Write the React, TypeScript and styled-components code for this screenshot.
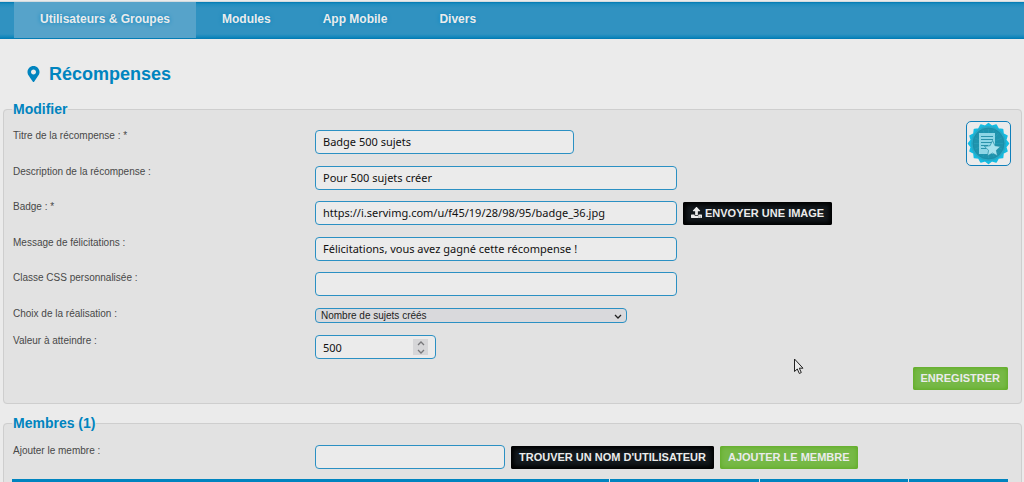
import React, { useId, useState } from "react";
import styled, { createGlobalStyle, css } from "styled-components";
import { FaMapMarkerAlt, FaUpload } from "react-icons/fa";

const blue = "#0084bf";

const GlobalStyle = createGlobalStyle`
  * { box-sizing: border-box; }
  body {
    margin: 0;
    background: #ebebeb;
    color: #404040;
    font-family: "Liberation Sans", Arial, sans-serif;
    font-size: 10px;
    line-height: 12px;
  }
`;

const Page = styled.div`
  height: 100vh;
  overflow: hidden;
`;

const NavBar = styled.nav`
  display: flex;
  margin-top: 2px;
  padding: 0 14px;
  background: linear-gradient(#0079b2, #1f8dbf 2px, #3092c1 6px, #3092c1 32px, #1288bd 35px, #0079b2);
  box-shadow: 0 -1px 0 #d3dbdf;
`;

const NavLink = styled.a<{ $active?: boolean }>`
  padding: 0 26px;
  font-size: 12px;
  font-weight: bold;
  line-height: 34px;
  height: 36px;
  margin-bottom: 1px;
  color: #ebebeb;
  text-decoration: none;
  text-shadow: 0 0 4px ${blue};
  ${(p) => p.$active && css`background: #56a3ca;`}
`;

const Main = styled.main`
  padding: 0 2px 0 3px;
`;

const Title = styled.h1`
  display: flex;
  align-items: center;
  gap: 9px;
  margin: 24px 0 16px 24px;
  color: ${blue};
  font-size: 18px;
  line-height: 22px;

  svg {
    width: 13px;
    height: 16px;
  }
`;

const Panel = styled.fieldset`
  margin: 0 0 11px;
  padding: 0 13px 13px 8px;
  min-width: 0;
  border: 1px solid #cecece;
  border-radius: 4px;
  background: #e2e2e2;
`;

const Legend = styled.legend`
  padding: 0 1px;
  color: ${blue};
  font-size: 14px;
  font-weight: bold;
  line-height: 16px;
`;

const PanelBody = styled.div`
  display: flex;
  align-items: flex-start;
  margin: 4px -3px 0 0;
`;

const Fields = styled.div`
  flex: 1;
  min-width: 0;
  padding-top: 9px;
`;

const TextFields = styled.div`
  display: grid;
  grid-auto-rows: 1fr;
  min-height: 178px;
`;

const Row = styled.div<{ $gap?: number }>`
  display: grid;
  grid-template-columns: 303px minmax(0, 1fr);
  align-items: start;
  margin-bottom: ${(p) => p.$gap ?? 0}px;
`;

const Label = styled.label`
  padding-left: 1px;
  color: #484848;
`;

const Controls = styled.div`
  display: flex;
  align-items: flex-end;
  gap: 6px;
`;

const controlBox = css`
  border: 1px solid #2b90c3;
  border-radius: 4px;
  background: #ebebeb;
`;

const valueText = css`
  color: #111;
  font-family: "Noto Sans", sans-serif;
  font-size: 11px;
`;

const TextInput = styled.input<{ $width: number }>`
  ${controlBox}
  ${valueText}
  width: ${(p) => p.$width}px;
  min-width: 0;
  height: 24px;
  padding: 0 7px 1px;
`;

const SelectBox = styled.div`
  position: relative;
  width: 312px;
  color: #222;

  svg {
    position: absolute;
    right: 5px;
    top: 6px;
    pointer-events: none;
  }
`;

const Select = styled.select`
  ${controlBox}
  display: block;
  width: 100%;
  height: 15px;
  padding: 0 5px;
  appearance: none;
  background: #d9d9dc;
  color: inherit;
  font-family: inherit;
  font-size: 10px;
  line-height: 12px;
`;

const NumberBox = styled.div`
  ${controlBox}
  display: flex;
  align-items: center;
  width: 121px;
  height: 24px;
  padding: 0 7px;
`;

const NumberInput = styled.input`
  ${valueText}
  flex: 1;
  min-width: 0;
  padding: 0;
  border: 0;
  outline: 0;
  background: none;
  appearance: textfield;

  &::-webkit-inner-spin-button {
    appearance: none;
  }
`;

const Spinner = styled.div`
  display: flex;
  flex-direction: column;
  width: 15px;
  background: #d6d6d8;
`;

const SpinButton = styled.button`
  display: flex;
  align-items: center;
  justify-content: center;
  height: 8px;
  padding: 0;
  border: 0;
  background: none;
  color: #77777a;
`;

const Button = styled.button<{ $tone: "dark" | "green" }>`
  display: flex;
  align-items: center;
  gap: 3px;
  height: 23px;
  padding: 0 8px 2px;
  border: 0;
  border-radius: 2px;
  color: #ebebeb;
  font-family: inherit;
  font-size: 11px;
  font-weight: bold;
  text-transform: uppercase;
  white-space: nowrap;
  ${(p) =>
    p.$tone === "dark"
      ? css`
          background: #13191d;
          box-shadow: inset 0 0 4px 3px #000;
        `
      : css`
          background: #76b947;
          box-shadow: inset 0 0 5px #58a618;
        `}
`;

const BadgeFrame = styled.div`
  ${controlBox}
  width: 45px;
  height: 45px;
  border-color: #0f7fba;
  border-radius: 5px;

  svg {
    display: block;
  }
`;

const Actions = styled.div`
  display: flex;
  justify-content: flex-end;
  margin-top: 8px;
`;

const MemberFields = styled.div`
  padding: 14px 0 10px;
`;

const MembersTable = styled.table`
  width: 100%;
  border-collapse: collapse;
  table-layout: fixed;

  th {
    height: 28px;
    width: 15%;
    padding: 0;
    background: ${blue};
  }

  th:first-child {
    width: 60%;
  }

  th:last-child {
    width: 10%;
  }

  th + th {
    border-left: 1px solid #dfe6ea;
  }
`;

const Pointer = styled.svg`
  position: absolute;
  left: 793px;
  top: 358px;
`;

function Chevron({ up }: { up?: boolean }) {
  return (
    <svg width="8" height="5" viewBox="0 0 8 5" fill="none" stroke="currentColor" strokeWidth="1.3">
      <path d={up ? "M1 4 4 1l3 3" : "M1 1l3 3 3-3"} />
    </svg>
  );
}

const sealPoints = Array.from({ length: 32 }, (_, i) => {
  const a = ((i + 1) * Math.PI) / 16 + Math.PI / 16;
  const r = i % 2 ? 17.5 : 20;
  return `${(21.5 + r * Math.sin(a)).toFixed(1)},${(21.5 - r * Math.cos(a)).toFixed(1)}`;
}).join(" ");

function BadgeImage() {
  return (
    <svg width="43" height="43" viewBox="0 0 43 43" role="img">
      <polygon points={sealPoints} fill="#14bce2" stroke="#14bce2" strokeWidth="1.5" strokeLinejoin="round" />
      <circle cx="21.5" cy="21.5" r="17.5" fill="#27a9c6" />
      <circle cx="21.5" cy="21.5" r="15.5" fill="#1f93ad" stroke="#178ba6" strokeWidth="0.7" />
      <g stroke="#2ba3bc" strokeWidth="0.5">
        <path d="M21.5 7v29M7 21.5h29M11.5 11.5l20 20M31.5 11.5l-20 20M16 8l11 27M27 8 16 35M8 16l27 11M35 16 8 27" />
      </g>
      <path d="M12 11h16v21H12z" fill="#8ed6e6" />
      <path d="M14 14.5h12M14 17.5h12M14 20.5h11M14 23.5h7M14 26.5h5" stroke="#2b93ab" strokeWidth="1" />
      <path
        d="m25.500 18.500 2.400 5.200 5.700.7-4.200 3.900 1.100 5.600-5-2.800-5 2.800 1.100-5.600-4.200-3.900 5.700-.7z"
        fill="#a8e2ee"
        stroke="#1f8ba4"
        strokeWidth="0.7"
      />
    </svg>
  );
}

type FieldProps = { label: string; value?: string; width?: number; children?: React.ReactNode };

function TextField({ label, value = "", width = 362, children }: FieldProps) {
  const id = useId();
  return (
    <Row>
      <Label htmlFor={id}>{label}</Label>
      <Controls>
        <TextInput id={id} type="text" defaultValue={value} $width={width} />
        {children}
      </Controls>
    </Row>
  );
}

export default function App() {
  const [goal, setGoal] = useState(500);
  return (
    <Page>
      <GlobalStyle />
      <NavBar>
        <NavLink href="#utilisateurs" $active>Utilisateurs &amp; Groupes</NavLink>
        <NavLink href="#modules">Modules</NavLink>
        <NavLink href="#mobile">App Mobile</NavLink>
        <NavLink href="#divers">Divers</NavLink>
      </NavBar>
      <Main>
        <Title>
          <FaMapMarkerAlt />
          Récompenses
        </Title>
        <Panel>
          <Legend>Modifier</Legend>
          <PanelBody>
            <Fields>
              <TextFields>
                <TextField label="Titre de la récompense : *" value="Badge 500 sujets" width={259} />
                <TextField label="Description de la récompense :" value="Pour 500 sujets créer" />
                <TextField label="Badge : *" value="https://i.servimg.com/u/f45/19/28/98/95/badge_36.jpg">
                  <Button type="button" $tone="dark">
                    <FaUpload />
                    Envoyer une image
                  </Button>
                </TextField>
                <TextField label="Message de félicitations :" value="Félicitations, vous avez gagné cette récompense !" />
                <TextField label="Classe CSS personnalisée :" />
              </TextFields>
              <Row $gap={12}>
                <Label htmlFor="choix">Choix de la réalisation :</Label>
                <SelectBox>
                  <Select id="choix">
                    <option>Nombre de sujets créés</option>
                  </Select>
                  <Chevron />
                </SelectBox>
              </Row>
              <Row>
                <Label htmlFor="valeur">Valeur à atteindre :</Label>
                <NumberBox>
                  <NumberInput
                    id="valeur"
                    type="number"
                    value={goal}
                    onChange={(e) => setGoal(Number(e.target.value))}
                  />
                  <Spinner>
                    <SpinButton type="button" onClick={() => setGoal(goal + 1)}>
                      <Chevron up />
                    </SpinButton>
                    <SpinButton type="button" onClick={() => setGoal(goal - 1)}>
                      <Chevron />
                    </SpinButton>
                  </Spinner>
                </NumberBox>
              </Row>
            </Fields>
            <BadgeFrame>
              <BadgeImage />
            </BadgeFrame>
          </PanelBody>
          <Actions>
            <Button type="submit" $tone="green">Enregistrer</Button>
          </Actions>
        </Panel>
        <Panel>
          <Legend>Membres (1)</Legend>
          <MemberFields>
            <TextField label="Ajouter le membre :" width={190}>
              <Button type="button" $tone="dark">Trouver un nom d'utilisateur</Button>
              <Button type="button" $tone="green">Ajouter le membre</Button>
            </TextField>
          </MemberFields>
          <MembersTable>
            <thead>
              <tr>
                <th />
                <th />
                <th />
                <th />
              </tr>
            </thead>
          </MembersTable>
        </Panel>
      </Main>
      <Pointer width="11" height="17" viewBox="0 0 11 17">
        <path d="M1.500 1v12.500l2.800-2.500 2 4.500 2-1-2-4.300h3.700z" fill="#ebebeb" stroke="#222" />
      </Pointer>
    </Page>
  );
}
